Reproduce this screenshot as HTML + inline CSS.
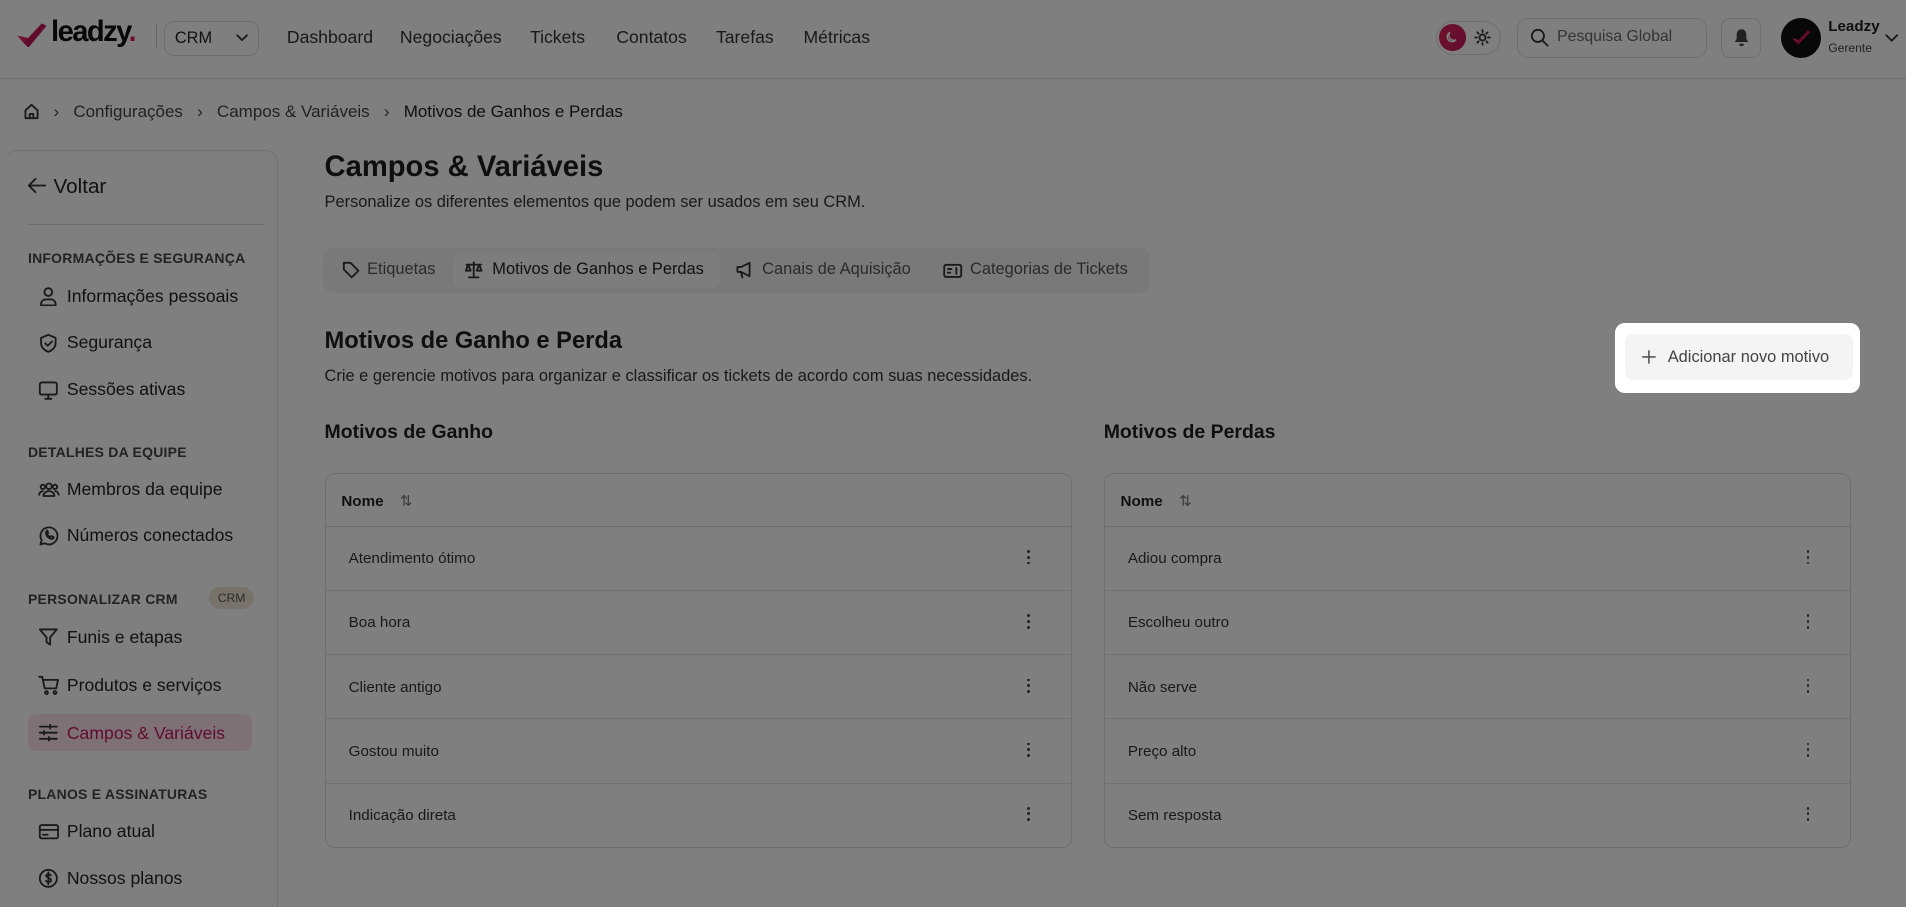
<!DOCTYPE html>
<html><head><meta charset="utf-8"><style>
*{box-sizing:border-box;margin:0;padding:0}
html,body{width:1906px;height:907px;overflow:hidden;background:#fff}
#w{width:1568px;height:746px;zoom:1.21556;position:relative;font-family:"Liberation Sans",sans-serif;color:#1f1f1f;background:#fff;overflow:hidden}
.a{position:absolute;white-space:nowrap}
svg{display:block}
.ic{stroke:#333;fill:none;stroke-width:1.5;stroke-linecap:round;stroke-linejoin:round}
.nav{font-size:14.5px;color:#333;top:22px}
.sec{font-size:11.5px;font-weight:bold;color:#444;letter-spacing:.2px;left:23px}
.it{font-size:14.5px;color:#222;left:55px}
.si{left:31px}
.tbl{position:absolute;border:1px solid #ddd;border-radius:8px;width:615px;height:309px;top:389px}
.tbl .h{height:44px;border-bottom:1px solid #ddd;font-size:12.5px;font-weight:bold;padding:15px 0 0 13px}
.tbl .r{height:52.7px;border-bottom:1px solid #e2e2e2;font-size:12.5px;color:#333;padding:19px 0 0 19px;position:relative}
.tbl .r:last-child{border-bottom:none}
.dots{position:absolute;right:33px;top:19px;width:3px}
.dots i{display:block;width:2.4px;height:2.4px;background:#444;border-radius:50%;margin-bottom:2.2px}
</style></head><body><div id="w">
<!-- header -->
<svg class="a" style="left:12px;top:17px" width="28" height="22" viewBox="0 0 28 22"><path d="M2 12l5 6 4-4z" fill="#e0245e"/><path d="M7 18L22 2l4 2L11 22z" fill="#c2185b"/></svg>
<div class="a" style="left:42px;top:13px;font-size:24px;font-weight:bold;letter-spacing:-1.3px;color:#111">leadzy<span style="color:#d81b60">.</span></div>
<div class="a" style="left:128px;top:20px;width:1px;height:20px;background:#ccc"></div>
<div class="a" style="left:135px;top:17px;width:78px;height:29px;border:1px solid #ddd;border-radius:8px;font-size:13.5px;padding:6px 0 0 8px;color:#222">CRM<svg class="a" style="left:58px;top:10px" width="10" height="7"><path d="M1 1l4 4 4-4" class="ic"/></svg></div>
<div class="a nav" style="left:236px">Dashboard</div>
<div class="a nav" style="left:329px">Negociações</div>
<div class="a nav" style="left:436px">Tickets</div>
<div class="a nav" style="left:507px">Contatos</div>
<div class="a nav" style="left:589px">Tarefas</div>
<div class="a nav" style="left:661px">Métricas</div>
<div class="a" style="left:1181px;top:17px;width:54px;height:28px;border:1px solid #ddd;border-radius:14px"></div>
<div class="a" style="left:1184px;top:20px;width:22px;height:22px;border-radius:50%;background:linear-gradient(135deg,#e0245e,#c2185b)"></div>
<svg class="a" style="left:1189px;top:25px" width="12" height="12" viewBox="0 0 12 12"><path d="M9 8A4 4 0 0 1 4 2a4 4 0 1 0 5 6z" fill="none" stroke="#fff" stroke-width="1.2"/></svg>
<svg class="a" style="left:1213px;top:24px" width="14" height="14" viewBox="0 0 14 14"><circle cx="7" cy="7" r="2.5" class="ic" stroke-width="1.2"/><path d="M7 1v1.5M7 11.5V13M1 7h1.5M11.5 7H13M2.8 2.8l1 1M10.2 10.2l1 1M2.8 11.2l1-1M10.2 3.8l1-1" class="ic" stroke-width="1.2"/></svg>
<div class="a" style="left:1248px;top:15px;width:156px;height:33px;border:1px solid #ddd;border-radius:9px"></div>
<svg class="a" style="left:1259px;top:23px" width="16" height="16" viewBox="0 0 16 16"><circle cx="6.5" cy="6.5" r="5" class="ic" stroke="#444"/><path d="M10.5 10.5l4 4" class="ic" stroke="#444"/></svg>
<div class="a" style="left:1281px;top:23px;font-size:13px;color:#666">Pesquisa Global</div>
<div class="a" style="left:1416px;top:15px;width:33px;height:33px;border:1px solid #ddd;border-radius:7px"></div>
<svg class="a" style="left:1426px;top:23px" width="14" height="16" viewBox="0 0 14 16"><path d="M7 1C4 1 3 3.5 3 6v3L1.5 11.5h11L11 9V6c0-2.5-1-5-4-5z" fill="#444"/><path d="M5 13a2 2 0 0 0 4 0z" fill="#444"/></svg>
<div class="a" style="left:1465px;top:15px;width:33px;height:33px;border-radius:50%;background:#111"></div>
<svg class="a" style="left:1473px;top:24px" width="18" height="14" viewBox="0 0 18 14"><path d="M1 7l3 4 2-2z" fill="#e0245e"/><path d="M4 11L14 1l2 1.5L6 13z" fill="#c2185b"/></svg>
<div class="a" style="left:1504px;top:15px;font-size:12.5px;font-weight:bold">Leadzy</div>
<div class="a" style="left:1504px;top:34px;font-size:10px;color:#444">Gerente</div>
<svg class="a" style="left:1551px;top:28px" width="11" height="7"><path d="M1 1l4.5 4.5L10 1" class="ic" stroke="#555"/></svg>
<div class="a" style="left:0;top:64px;width:1568px;height:1px;background:#e3e3e3"></div>
<!-- breadcrumb -->
<svg class="a" style="left:19px;top:85px" width="14" height="14" viewBox="0 0 14 14"><path d="M2 6l5-4.5L12 6v6.5H2z" class="ic" stroke="#444" stroke-width="1.2"/><path d="M5.5 12.5V9h3v3.5" class="ic" stroke="#444" stroke-width="1.2"/></svg>
<div class="a" style="left:44px;top:84px;font-size:14px;color:#444">›&nbsp;&nbsp;&nbsp;Configurações&nbsp;&nbsp;&nbsp;›&nbsp;&nbsp;&nbsp;Campos &amp; Variáveis&nbsp;&nbsp;&nbsp;›&nbsp;&nbsp;&nbsp;<span style="color:#1f1f1f">Motivos de Ganhos e Perdas</span></div>
<!-- sidebar -->
<div class="a" style="left:4px;top:123px;width:225px;height:640px;border:1px solid #e3e3e3;border-radius:10px;border-bottom:none;border-left:none"></div>
<svg class="a" style="left:22px;top:146px" width="16" height="14" viewBox="0 0 16 14"><path d="M15 7H2M7 1.5L1.5 7 7 12.5" class="ic" stroke="#222"/></svg>
<div class="a" style="left:44px;top:144px;font-size:17px;color:#222">Voltar</div>
<div class="a" style="left:22px;top:184px;width:196px;height:1px;background:#ddd"></div>
<div class="a sec" style="top:206px">INFORMAÇÕES E SEGURANÇA</div>
<svg class="a si" style="top:235px" width="17" height="17" viewBox="0 0 17 17"><circle cx="8.5" cy="5" r="3.2" class="ic"/><path d="M2.5 16v-1a4 4 0 0 1 4-4h4a4 4 0 0 1 4 4v1z" class="ic"/></svg>
<div class="a it" style="top:235px">Informações pessoais</div>
<svg class="a si" style="top:274px" width="17" height="17" viewBox="0 0 17 17"><path d="M8.5 1.5l6 2.5v4c0 4-3 6.5-6 7.5-3-1-6-3.5-6-7.5V4z" class="ic"/><path d="M6 8.5l2 2 3.5-3.5" class="ic"/></svg>
<div class="a it" style="top:273px">Segurança</div>
<svg class="a si" style="top:313px" width="17" height="17" viewBox="0 0 17 17"><rect x="1.5" y="2" width="14" height="10" rx="1.5" class="ic"/><path d="M6 15.5h5M8.5 12v3.5" class="ic"/></svg>
<div class="a it" style="top:312px">Sessões ativas</div>
<div class="a sec" style="top:365px">DETALHES DA EQUIPE</div>
<svg class="a si" style="top:394px" width="18" height="17" viewBox="0 0 18 17"><circle cx="9" cy="6" r="2.3" class="ic" stroke-width="1.2"/><circle cx="4" cy="6.5" r="1.8" class="ic" stroke-width="1.2"/><circle cx="14" cy="6.5" r="1.8" class="ic" stroke-width="1.2"/><path d="M4.5 14a4.5 4 0 0 1 9 0zM1 13a3 3 0 0 1 3-3M17 13a3 3 0 0 0-3-3" class="ic" stroke-width="1.2"/></svg>
<div class="a it" style="top:394px">Membros da equipe</div>
<svg class="a si" style="top:432px" width="18" height="18" viewBox="0 0 18 18"><path d="M2 16l1-3.5A7 7 0 1 1 5.5 15z" class="ic"/><path d="M6.5 6c0 3 2.5 5.5 5.5 5.5l1-1.5-2-1-1 1c-1 -.5-2-1.5-2.5-2.5l1-1-1-2z" class="ic" stroke-width="1.1"/></svg>
<div class="a it" style="top:432px">Números conectados</div>
<div class="a sec" style="top:486px">PERSONALIZAR CRM</div>
<div class="a" style="left:172px;top:483px;width:37px;height:18px;border-radius:9px;background:#efe6d6;font-size:10px;color:#555;text-align:center;padding-top:3px">CRM</div>
<svg class="a si" style="top:516px" width="17" height="17" viewBox="0 0 17 17"><path d="M1.5 2h14l-5.5 6.5v6l-3-2v-4z" class="ic"/></svg>
<div class="a it" style="top:516px">Funis e etapas</div>
<svg class="a si" style="top:555px" width="18" height="17" viewBox="0 0 18 17"><path d="M1 1.5h2.5l2 9.5h9.5l1.5-7H4.5" class="ic"/><circle cx="7" cy="14.5" r="1.2" class="ic"/><circle cx="14" cy="14.5" r="1.2" class="ic"/></svg>
<div class="a it" style="top:555px">Produtos e serviços</div>
<div class="a" style="left:23px;top:587px;width:184px;height:31px;border-radius:7px;background:#fbe3ec"></div>
<svg class="a si" style="top:595px" width="17" height="16" viewBox="0 0 17 16"><path d="M1.5 3h14M1.5 8h14M1.5 13h14" class="ic" stroke="#c2185b" stroke-width="1.3"/><path d="M10 1.5v3M5 6.5v3M9 11.5v3" class="ic" stroke="#c2185b" stroke-width="1.3"/></svg>
<div class="a it" style="top:595px;color:#c2185b">Campos &amp; Variáveis</div>
<div class="a sec" style="top:647px">PLANOS E ASSINATURAS</div>
<svg class="a si" style="top:676px" width="18" height="16" viewBox="0 0 18 16"><rect x="1.5" y="2.5" width="15" height="11" rx="1.5" class="ic"/><path d="M1.5 6.5h15M4 10.5h4" class="ic"/></svg>
<div class="a it" style="top:675px">Plano atual</div>
<svg class="a si" style="top:714px" width="17" height="17" viewBox="0 0 17 17"><circle cx="8.5" cy="8.5" r="7" class="ic"/><path d="M10.5 6c-.5-1-3.5-1.3-3.8.3S10.8 8 10.8 10s-3.5 1.8-4.3.6M8.5 3.5v10" class="ic" stroke-width="1.2"/></svg>
<div class="a it" style="top:714px">Nossos planos</div>
<!-- main -->
<div class="a" style="left:267px;top:124px;font-size:24px;font-weight:bold;color:#1f1f1f">Campos &amp; Variáveis</div>
<div class="a" style="left:267px;top:159px;font-size:13.5px;color:#333">Personalize os diferentes elementos que podem ser usados em seu CRM.</div>
<div class="a" style="left:266px;top:204px;width:680px;height:37px;border-radius:8px;background:#f3f3f3"></div>
<div class="a" style="left:373px;top:208px;width:219px;height:29px;border-radius:6px;background:#fbfbfb"></div>
<svg class="a" style="left:281px;top:215px" width="15" height="15" viewBox="0 0 15 15"><path d="M1.5 1.5h5.5l6.5 6.5-5.5 5.5L1.5 7z" class="ic" stroke="#555" stroke-width="1.2"/></svg>
<div class="a" style="left:302px;top:214px;font-size:13.5px;color:#555">Etiquetas</div>
<svg class="a" style="left:382px;top:215px" width="16" height="15" viewBox="0 0 16 15"><path d="M8 1v12M4 13.5h8M2 3h12M3.5 3l-2 5h4zM12.5 3l-2 5h4z" class="ic" stroke="#222" stroke-width="1.1"/></svg>
<div class="a" style="left:405px;top:214px;font-size:13.5px;color:#1f1f1f">Motivos de Ganhos e Perdas</div>
<svg class="a" style="left:605px;top:215px" width="16" height="15" viewBox="0 0 16 15"><path d="M2 5h3l7-3.5v11L5 9H2zM5 9l1 4.5" class="ic" stroke="#555" stroke-width="1.2"/></svg>
<div class="a" style="left:627px;top:214px;font-size:13.5px;color:#555">Canais de Aquisição</div>
<svg class="a" style="left:776px;top:216px" width="16" height="13" viewBox="0 0 16 13"><rect x="1" y="1.5" width="14" height="10" rx="1.5" class="ic" stroke="#555" stroke-width="1.2"/><path d="M4 5h3M4 8h2M11 4v5" class="ic" stroke="#555" stroke-width="1.2"/></svg>
<div class="a" style="left:798px;top:214px;font-size:13.5px;color:#555">Categorias de Tickets</div>
<div class="a" style="left:267px;top:270px;font-size:19.5px;font-weight:bold">Motivos de Ganho e Perda</div>
<div class="a" style="left:267px;top:302px;font-size:13.5px;color:#333">Crie e gerencie motivos para organizar e classificar os tickets de acordo com suas necessidades.</div>
<div class="a" style="left:267px;top:346px;font-size:16px;font-weight:bold">Motivos de Ganho</div>
<div class="a" style="left:908px;top:346px;font-size:16px;font-weight:bold">Motivos de Perdas</div>
<div class="tbl" style="left:267px"><div class="h">Nome <span style="font-weight:normal;color:#777;margin-left:10px">⇅</span></div>
<div class="r">Atendimento ótimo<div class="dots"><i></i><i></i><i></i></div></div>
<div class="r">Boa hora<div class="dots"><i></i><i></i><i></i></div></div>
<div class="r">Cliente antigo<div class="dots"><i></i><i></i><i></i></div></div>
<div class="r">Gostou muito<div class="dots"><i></i><i></i><i></i></div></div>
<div class="r">Indicação direta<div class="dots"><i></i><i></i><i></i></div></div></div>
<div class="tbl" style="left:908px"><div class="h">Nome <span style="font-weight:normal;color:#777;margin-left:10px">⇅</span></div>
<div class="r">Adiou compra<div class="dots"><i></i><i></i><i></i></div></div>
<div class="r">Escolheu outro<div class="dots"><i></i><i></i><i></i></div></div>
<div class="r">Não serve<div class="dots"><i></i><i></i><i></i></div></div>
<div class="r">Preço alto<div class="dots"><i></i><i></i><i></i></div></div>
<div class="r">Sem resposta<div class="dots"><i></i><i></i><i></i></div></div></div>
<!-- overlay with highlight -->
<div class="a" style="left:1329px;top:266px;width:201px;height:57px;border-radius:8px;background:#fff;box-shadow:0 0 0 3000px rgba(0,0,0,.5)"></div>
<div class="a" style="left:1337px;top:275px;width:187px;height:38px;border-radius:6px;background:#f4f4f4"></div>
<svg class="a" style="left:1350px;top:287px" width="13" height="13" viewBox="0 0 13 13"><path d="M6.5 1v11M1 6.5h11" stroke="#555" stroke-width="1.3"/></svg>
<div class="a" style="left:1372px;top:286px;font-size:13.5px;color:#444">Adicionar novo motivo</div>
</div></body></html>
